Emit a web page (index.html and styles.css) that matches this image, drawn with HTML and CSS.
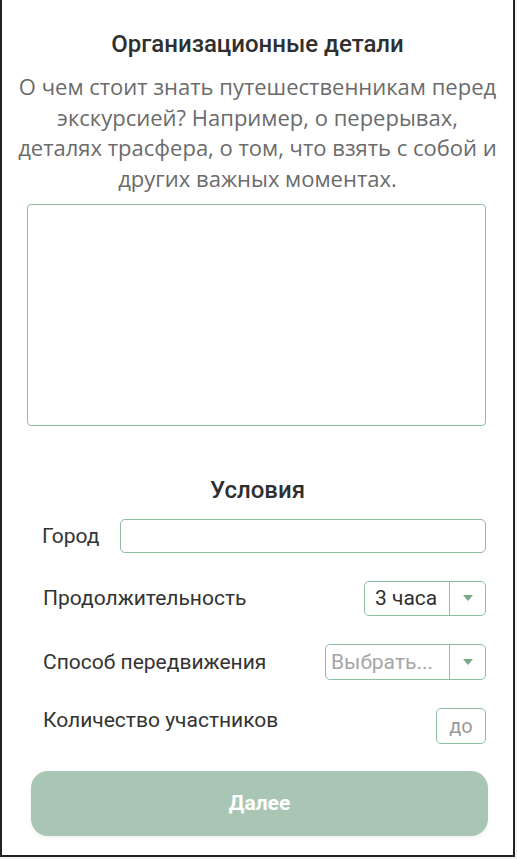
FILE: index.html
```html
<!DOCTYPE html>
<html lang="ru">
<head>
    <meta charset="UTF-8">
    <meta name="viewport" content="width=device-width, initial-scale=1.0">
    <title>Организационные детали</title>
    <link rel="stylesheet" href="styles.css">
</head>
<body>
<div class="screen">
    <h2 class="section-title">Организационные детали</h2>
    <p class="hint">О чем стоит знать путешественникам перед экскурсией? Например, о перерывах, деталях трасфера, о том, что взять с собой и других важных моментах.</p>
    <div class="notes-box"></div>

    <h2 class="section-title conditions-title">Условия</h2>

    <div class="field-row city-row">
        <span class="field-label">Город</span>
        <div class="text-input wide"></div>
    </div>

    <div class="field-row">
        <span class="field-label">Продолжительность</span>
        <div class="select-box duration">
            <span class="select-value">3 часа</span>
            <span class="select-arrow"></span>
        </div>
    </div>

    <div class="field-row">
        <span class="field-label">Способ передвижения</span>
        <div class="select-box transport">
            <span class="select-value placeholder">Выбрать...</span>
            <span class="select-arrow"></span>
        </div>
    </div>

    <div class="field-row count-row">
        <span class="field-label">Количество участников</span>
        <div class="text-input small">до</div>
    </div>

    <button class="next-button">Далее</button>
</div>
</body>
</html>
```

FILE: styles.css
```css
body {
    margin: 0;
    background-color: #f4f4f4;
    font-family: Roboto, "Liberation Sans", sans-serif;
}
.screen {
    box-sizing: border-box;
    width: 515px;
    height: 857px;
    background-color: #ffffff;
    border: 2px solid #222222;
    border-top: none;
    padding-top: 30px;
}
.section-title {
    margin: 0;
    text-align: center;
    font-size: 24px;
    line-height: 28px;
    font-weight: 500;
    color: #2f2f2f;
}
.hint {
    margin: 13px 13px 0 13px;
    text-align: center;
    font-family: "Open Sans", "Noto Sans", sans-serif;
    font-size: 22px;
    line-height: 30.7px;
    color: #6b6b6b;
}
.notes-box {
    box-sizing: border-box;
    margin: 10px 0 0 25px;
    width: 459px;
    height: 222px;
    border: 1px solid #8fbd9f;
    border-radius: 4px;
}
.conditions-title {
    margin-top: 50px;
}
.field-row {
    display: flex;
    align-items: center;
    justify-content: space-between;
    padding: 0 27px 0 41px;
    margin-top: 28px;
}
.city-row {
    margin-top: 15px;
    padding-left: 40px;
}
.count-row {
    align-items: flex-start;
}
.field-label {
    font-size: 21px;
    color: #333333;
}
.text-input {
    box-sizing: border-box;
    height: 35px;
    border: 1px solid #8fbd9f;
    border-radius: 5px;
}
.text-input.wide {
    flex: 1;
    margin-left: 21px;
    height: 34px;
}
.text-input.small {
    width: 50px;
    height: 36px;
    display: flex;
    align-items: center;
    justify-content: center;
    font-size: 20px;
    color: #9a9a9a;
}
.select-box {
    box-sizing: border-box;
    display: flex;
    height: 35px;
    border: 1px solid #8fbd9f;
    border-radius: 5px;
}
.select-box.duration {
    width: 122px;
}
.select-box.transport {
    width: 161px;
    height: 36px;
}
.select-value {
    flex: 1;
    display: flex;
    align-items: center;
    padding-left: 10px;
    font-size: 21px;
    color: #2f2f2f;
}
.select-value.placeholder {
    padding-left: 5px;
    color: #a6a6a6;
}
.select-arrow {
    width: 35px;
    border-left: 1px solid #8fbd9f;
    display: flex;
    align-items: center;
    justify-content: center;
}
.select-arrow::after {
    content: "";
    border-left: 5px solid transparent;
    border-right: 5px solid transparent;
    border-top: 6px solid #74a887;
}
.next-button {
    display: block;
    box-sizing: border-box;
    margin: 27px 0 0 29px;
    width: 457px;
    height: 65px;
    border: none;
    border-radius: 17px;
    background-color: #a8c6b3;
    color: #ffffff;
    font-family: Roboto, "Liberation Sans", sans-serif;
    font-size: 21px;
    font-weight: 700;
    box-shadow: 0 2px 4px rgba(0, 0, 0, 0.06);
}
```
